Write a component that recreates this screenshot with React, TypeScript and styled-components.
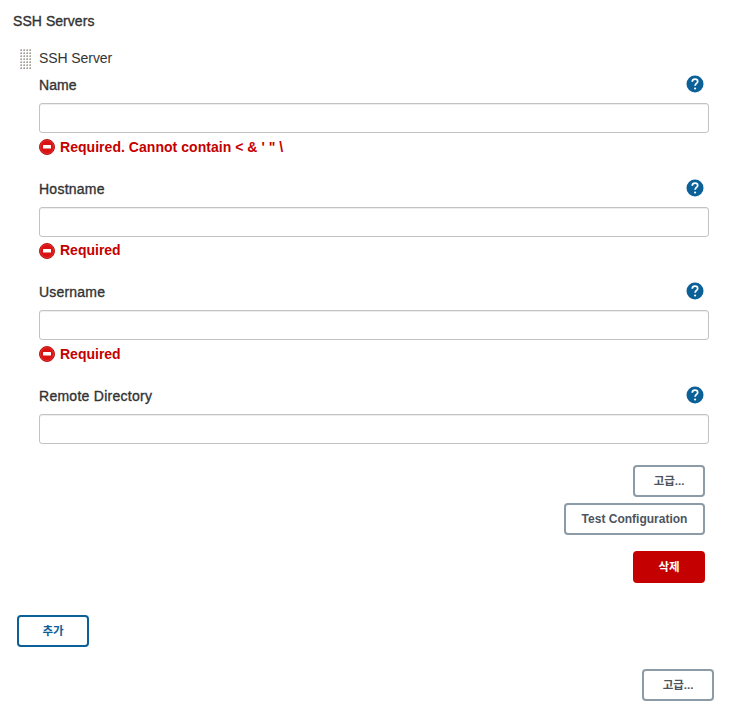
import React from "react";
import styled, { createGlobalStyle, css } from "styled-components";

const GlobalStyle = createGlobalStyle`
  * { box-sizing: border-box; }
  body {
    margin: 0;
    background: #fff;
    color: #333;
    font-family: "Liberation Sans", "Noto Sans CJK KR", sans-serif;
    font-size: 14px;
    line-height: 20px;
  }
`;

const Page = styled.main`
  width: 732px;
  height: 710px;
  padding: 11px 18px 0 13px;
  display: flex;
  flex-direction: column;
`;

const medium = css`
  -webkit-text-stroke: 0.35px currentColor;
`;

const Title = styled.h1`
  margin: 0;
  height: 20px;
  font-size: 14px;
  font-weight: 400;
  letter-spacing: 0.05px;
  ${medium}
`;

const Server = styled.section`
  display: grid;
  grid-template-columns: 19px 670px;
  margin: 17px 0 0 7px;
`;

const ServerName = styled.div`
  height: 27.2px;
  letter-spacing: -0.08px;
`;

const Field = styled.div<{ $last?: boolean }>`
  height: ${(p) => (p.$last ? "58px" : "103.6px")};
`;

const LabelRow = styled.div`
  display: flex;
  justify-content: space-between;
  height: 28px;
  padding-right: 5px;
`;

const Label = styled.label<{ $spacing: number }>`
  letter-spacing: ${(p) => p.$spacing}px;
  ${medium}
`;

const HelpButton = styled.button`
  width: 18px;
  height: 18px;
  padding: 0;
  border: 0;
  background: none;
  svg { display: block; }
`;

const Input = styled.input`
  display: block;
  width: 100%;
  height: 30px;
  padding: 0 8px;
  border: 1px solid #c3c3c3;
  border-radius: 3px;
  box-shadow: inset 0 1px 1px rgba(0, 0, 0, 0.075);
  font: inherit;
  outline: none;
`;

const ErrorRow = styled.div<{ $spacing: number }>`
  display: flex;
  gap: 5px;
  margin-top: 3.6px;
  height: 20px;
  color: #c40000;
  font-weight: 700;
  letter-spacing: ${(p) => p.$spacing}px;
  white-space: nowrap;
  svg { flex: none; margin-top: 2.4px; }
`;

const Actions = styled.div`
  display: flex;
  flex-direction: column;
  align-items: flex-end;
  gap: 6px;
  padding: 21px 4px 0 0;
`;

const tones = {
  neutral: css`border-color: #8c9ba5; color: #4d545d; background: #fff;`,
  danger: css`border-color: #c40000; color: #fff; background: #c40000;`,
  primary: css`border-color: #0b6098; color: #0b6098; background: #fff;`,
};

const Button = styled.button<{ $tone: keyof typeof tones; $wide?: boolean }>`
  width: ${(p) => (p.$wide ? 141 : 72)}px;
  height: 32px;
  padding: 0;
  border: 2px solid;
  border-radius: 4px;
  font-family: inherit;
  font-size: ${(p) => (p.$wide ? 12 : 11.5)}px;
  font-weight: 700;
  line-height: 18px;
  white-space: nowrap;
  ${(p) => tones[p.$tone]}
`;

const DeleteSlot = styled.div`
  margin-top: 10px;
  display: flex;
`;

const AddRow = styled.div`
  display: flex;
  margin: 32px 0 0 4px;
`;

const FooterRow = styled.div`
  display: flex;
  justify-content: flex-end;
  margin-top: 22px;
`;

const HelpIcon = () => (
  <svg width="18" height="18" viewBox="0 0 18 18" aria-hidden="true">
    <circle cx="9" cy="9" r="8.5" fill="#0b6098" />
    <path d="M6.2 6.7c.1-1.8 1.2-2.6 2.8-2.6s2.7.9 2.7 2.3c0 2-2.6 2.1-2.6 4.4" fill="none" stroke="#fff" strokeWidth="1.7" />
    <circle cx="9.1" cy="13.5" r="1.1" fill="#fff" />
  </svg>
);

const ErrorIcon = () => (
  <svg width="16" height="16" viewBox="0 0 16 16" aria-hidden="true">
    <circle cx="8" cy="8" r="7.5" fill="#da1212" stroke="#bd1515" />
    <circle cx="8" cy="8" r="6.6" fill="none" stroke="#e24a4a" strokeWidth=".5" />
    <rect x="4" y="6" width="8" height="3.5" rx=".2" fill="#fff" />
  </svg>
);

const Grip = styled.svg`
  display: block;
  margin-top: 1px;
`;

const DragHandle = () => (
  <Grip width="12" height="21" viewBox="0 0 12 21" aria-hidden="true">
    <defs>
      <pattern id="grip-dots" width="3" height="3" patternUnits="userSpaceOnUse">
        <path d="M0 0h1v1H0z" fill="#dedcd8" />
        <path d="M1 0h1v1H1zM0 1h1v1H0z" fill="#bcb9b4" />
        <path d="M1 1h1v1H1z" fill="#a4a09a" />
      </pattern>
    </defs>
    <rect width="12" height="21" fill="url(#grip-dots)" />
  </Grip>
);

const fields = [
  { id: "name", label: "Name", spacing: 0.05, error: "Required. Cannot contain < & ' \" \\", errorSpacing: 0.04 },
  { id: "hostname", label: "Hostname", spacing: 0.25, error: "Required", errorSpacing: 0 },
  { id: "username", label: "Username", spacing: 0.2, error: "Required", errorSpacing: 0 },
  { id: "directory", label: "Remote Directory", spacing: 0.27 },
];

export default function App() {
  return (
    <>
      <GlobalStyle />
      <Page>
        <Title>SSH Servers</Title>
        <Server>
          <DragHandle />
          <div>
            <ServerName>SSH Server</ServerName>
            {fields.map((f) => (
              <Field key={f.id} $last={!f.error}>
                <LabelRow>
                  <Label htmlFor={f.id} $spacing={f.spacing}>{f.label}</Label>
                  <HelpButton type="button" aria-label={`${f.label} help`}><HelpIcon /></HelpButton>
                </LabelRow>
                <Input id={f.id} />
                {f.error && (
                  <ErrorRow $spacing={f.errorSpacing ?? 0}>
                    <ErrorIcon />
                    <span>{f.error}</span>
                  </ErrorRow>
                )}
              </Field>
            ))}
            <Actions>
              <Button type="button" $tone="neutral">고급...</Button>
              <Button type="button" $tone="neutral" $wide>Test Configuration</Button>
              <DeleteSlot>
                <Button type="button" $tone="danger">삭제</Button>
              </DeleteSlot>
            </Actions>
          </div>
        </Server>
        <AddRow>
          <Button type="button" $tone="primary">추가</Button>
        </AddRow>
        <FooterRow>
          <Button type="button" $tone="neutral">고급...</Button>
        </FooterRow>
      </Page>
    </>
  );
}
